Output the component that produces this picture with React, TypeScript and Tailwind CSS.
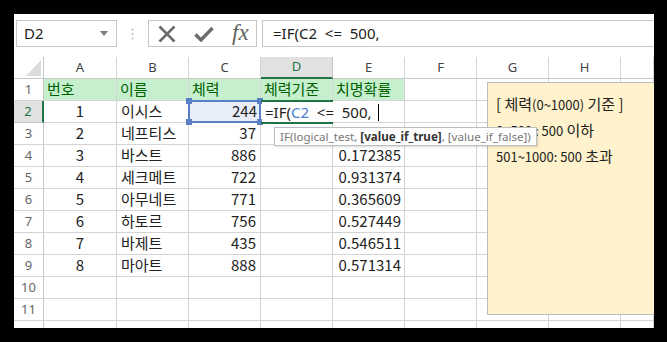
import React from "react";

const KR = "font-['Noto_Sans_CJK_KR',sans-serif]";
const UI = "font-['Noto_Sans','Noto_Sans_CJK_KR',sans-serif]";

const COLS = ["A", "B", "C", "D", "E", "F", "G", "H", ""];

const ROWS: [number, string, number, string][] = [
  [1, "이시스", 244, ""],
  [2, "네프티스", 37, ""],
  [3, "바스트", 886, "0.172385"],
  [4, "세크메트", 722, "0.931374"],
  [5, "아무네트", 771, "0.365609"],
  [6, "하토르", 756, "0.527449"],
  [7, "바제트", 435, "0.546511"],
  [8, "마아트", 888, "0.571314"],
];

const HEADS = ["번호", "이름", "체력", "체력기준", "치명확률"];

function Handle({ pos }: { pos: string }) {
  return <div className={`absolute w-[6px] h-[6px] bg-[#5b7fc4] ${pos}`} />;
}

function FormulaBar() {
  return (
    <div className="flex h-[27px] mt-[6px] ml-[2px] items-stretch">
      {/* name box */}
      <div className="w-[101px] border border-[#c6c6c6] flex items-center justify-between pl-[7px] pr-[8px]">
        <span className={`${UI} text-[15px] text-[#222]`}>D2</span>
        <svg width="8" height="5" viewBox="0 0 8 5">
          <path d="M0 0 L8 0 L4 5 Z" fill="#7a7a7a" />
        </svg>
      </div>
      <div className="w-[31px] flex items-center justify-center">
        <svg width="3" height="12" viewBox="0 0 3 12">
          <circle cx="1.5" cy="1.5" r="1" fill="#b5b5b5" />
          <circle cx="1.5" cy="6" r="1" fill="#b5b5b5" />
          <circle cx="1.5" cy="10.5" r="1" fill="#b5b5b5" />
        </svg>
      </div>
      {/* cancel / enter / fx */}
      <div className="w-[109px] border border-[#c6c6c6] flex items-center pl-[9px] gap-[18px]">
        <svg width="18" height="18" viewBox="0 0 18 18">
          <path d="M1.5 1.5 L16.5 16.5 M16.5 1.5 L1.5 16.5" stroke="#6b6b6b" strokeWidth="2.6" />
        </svg>
        <svg width="20" height="16" viewBox="0 0 20 16">
          <path d="M1.5 8.5 L7 14 L18.5 2" stroke="#6b6b6b" strokeWidth="3.4" fill="none" />
        </svg>
        <span className="font-['Liberation_Serif',serif] italic text-[23px] leading-none text-[#5f5f5f] -mt-[3px]">
          fx
        </span>
      </div>
      <div className="flex-1 ml-[5px] border-y border-l border-[#c6c6c6] flex items-center pl-[10px]">
        <span className={`${UI} text-[15px] text-[#222] whitespace-pre`}>=IF(C2  &lt;=  500,</span>
      </div>
    </div>
  );
}

export default function App() {
  return (
    <div className="w-[667px] h-[342px] bg-black pl-[14px] pt-[14px]">
      <div className="relative w-[640px] h-[314px] bg-white overflow-hidden">
        <FormulaBar />

        {/* sheet */}
        <div className="mt-[10px] grid grid-cols-[30px_73px_72px_72px_72px_72px_72px_72px_72px_1fr]">
          {/* header row */}
          <div className="h-[22px] border-r border-b border-[#c6c6c6] flex items-end justify-end pr-[2px] pb-[2px]">
            <svg width="15" height="16" viewBox="0 0 15 16">
              <path d="M15 0 L15 16 L0 16 Z" fill="#dcdcdc" />
            </svg>
          </div>
          {COLS.map((c) =>
            c === "D" ? (
              <div
                key="hD"
                className={`h-[22px] bg-[#e1e1e1] border-r border-[#c6c6c6] border-b-2 border-b-[#217346] flex items-center justify-center ${UI} text-[13px] text-[#217346]`}
              >
                D
              </div>
            ) : (
              <div
                key={"h" + c}
                className={`h-[22px] border-r border-b border-[#d5d5d5] border-b-[#c6c6c6] flex items-center justify-center ${UI} text-[13px] text-[#444]`}
              >
                {c}
              </div>
            )
          )}

          {/* row 1 */}
          <div className={`h-[22px] border-r border-b border-[#d5d5d5] border-r-[#c6c6c6] flex items-center justify-center ${UI} text-[13px] text-[#666]`}>
            1
          </div>
          {COLS.map((c, i) => (
            <div
              key={"r1" + c + i}
              className={`h-[22px] border-r border-b border-[#d4d4d4] flex items-center pl-[3px] ${KR} text-[15px] ${
                i < 5 ? "bg-[#c6efce] text-[#006100]" : ""
              }`}
            >
              {HEADS[i] ?? ""}
            </div>
          ))}

          {/* data rows */}
          {ROWS.map(([n, name, hp, crit], r) => {
            const row = r + 2;
            const sel = row === 2;
            return (
              <React.Fragment key={row}>
                <div
                  className={`h-[22px] border-b flex items-center justify-center ${UI} text-[13px] ${
                    sel
                      ? "bg-[#e1e1e1] text-[#217346] border-r-2 border-r-[#217346] border-b-[#c6c6c6]"
                      : "text-[#666] border-r border-[#d5d5d5] border-r-[#c6c6c6]"
                  }`}
                >
                  {row}
                </div>
                <div className={`h-[22px] border-r border-b border-[#d4d4d4] flex items-center justify-center ${KR} text-[15px] text-[#222]`}>
                  {n}
                </div>
                <div className={`h-[22px] border-r border-b border-[#d4d4d4] flex items-center pl-[4px] ${KR} text-[15px] text-[#222]`}>
                  {name}
                </div>
                {sel ? (
                  <div className={`relative -mt-px -ml-px h-[23px] w-[73px] border-2 border-[#5b7fc4] bg-[#e8eef9] flex items-center justify-end pr-[2px] ${KR} text-[15px] text-[#222]`}>
                    {hp}
                    <Handle pos="-left-[4px] -top-[4px]" />
                    <Handle pos="-right-[4px] -top-[4px]" />
                    <Handle pos="-left-[4px] -bottom-[4px]" />
                    <Handle pos="-right-[4px] -bottom-[4px]" />
                  </div>
                ) : (
                  <div className={`h-[22px] border-r border-b border-[#d4d4d4] flex items-center justify-end pr-[4px] ${KR} text-[15px] text-[#222]`}>
                    {hp}
                  </div>
                )}
                <div className="h-[22px] border-r border-b border-[#d4d4d4]" />
                <div className={`h-[22px] border-r border-b border-[#d4d4d4] flex items-center justify-end pr-[3px] ${KR} text-[15px] text-[#222]`}>
                  {crit}
                </div>
                <div className="h-[22px] border-r border-b border-[#d4d4d4]" />
                <div className="h-[22px] border-r border-b border-[#d4d4d4]" />
                <div className="h-[22px] border-r border-b border-[#d4d4d4]" />
                <div className="h-[22px] border-b border-[#d4d4d4]" />
              </React.Fragment>
            );
          })}

          {/* empty rows */}
          {[10, 11].map((row) => (
            <React.Fragment key={row}>
              <div className={`h-[22px] border-r border-b border-[#d5d5d5] border-r-[#c6c6c6] flex items-center justify-center ${UI} text-[13px] text-[#666]`}>
                {row}
              </div>
              {COLS.map((c, i) => (
                <div key={row + c + i} className="h-[22px] border-r border-b border-[#d4d4d4]" />
              ))}
            </React.Fragment>
          ))}
          {/* partly visible row 12, label clipped */}
          <div className="h-[22px] border-r border-[#c6c6c6]" />
          {COLS.map((c, i) => (
            <div key={"r12" + c + i} className="h-[22px] border-r border-[#d4d4d4]" />
          ))}
        </div>

        {/* in-cell editor for D2 */}
        <div className="absolute left-[248px] top-[88px] w-[140px] h-[20px] bg-white flex items-center pl-[3px]">
          <span className={`${UI} text-[15px] text-[#222] whitespace-pre`}>
            =IF(<span className="text-[#4a7fd0]">C2</span>  &lt;=  500,
          </span>
          <span className="w-px h-[17px] bg-black ml-[6px]" />
        </div>
        <div className="absolute left-[247px] top-[86px] w-[72px] h-[24px] border-y-2 border-[#217346]" />

        {/* function tooltip */}
        <div
          className={`absolute left-[260px] top-[113px] h-[19px] border border-[#bdbdbd] bg-white shadow-[1px_1px_2px_rgba(0,0,0,0.15)] px-[5px] flex items-center z-20 ${UI} text-[11.6px] text-[#777] whitespace-pre`}
        >
          IF(logical_test, <b className="text-[#333]">[value_if_true]</b>, [value_if_false])
        </div>

        {/* comment box */}
        <div className="absolute left-[473px] top-[68px] w-[200px] h-[233px] bg-[#fff2cc] border border-[#bdbdbd] z-10 pl-[8px] pt-[8px] text-[#222]">
          <div className={`${KR} text-[15px] leading-[25px]`}>
            [ 체력<span className="text-[13px]">(0~1000)</span> 기준 ]
          </div>
          <div className={`${KR} text-[15px] leading-[25px]`}>
            <span className="text-[13px]">0~500 : 500</span> 이하
          </div>
          <div className={`${KR} text-[15px] leading-[25px]`}>
            <span className="text-[13px]">501~1000: 500</span> 초과
          </div>
        </div>
      </div>
    </div>
  );
}
